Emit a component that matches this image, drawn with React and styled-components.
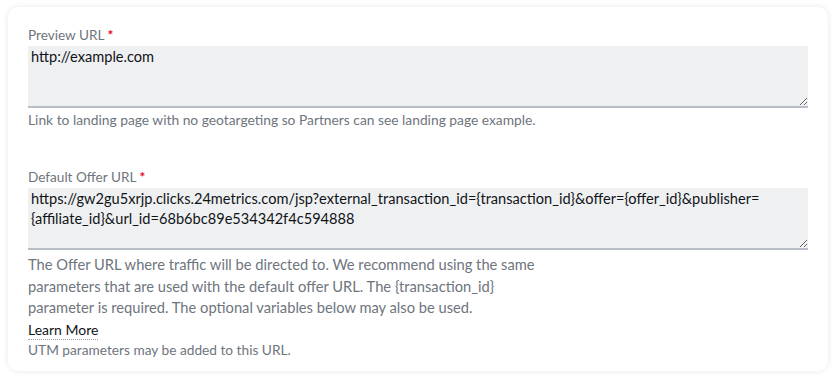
import React from "react";
import styled, { createGlobalStyle } from "styled-components";

const GlobalStyle = createGlobalStyle`
  body {
    margin: 0;
    background: #ffffff;
    font-family: Lato, "Open Sans", sans-serif;
  }
`;

const Page = styled.div`
  padding: 7px 8px;
`;

const Card = styled.div`
  width: 820px;
  height: 364px;
  box-sizing: border-box;
  background: #ffffff;
  border-radius: 10px;
  box-shadow: 0 0 6px rgba(0, 0, 0, 0.09);
  padding: 18px 20px 0 20px;
`;

const Field = styled.div`
  display: flex;
  flex-direction: column;
  margin-bottom: ${(p) => p.gap || 0}px;
`;

const Label = styled.label`
  font-size: 13.6px;
  color: #6e757d;
  line-height: 18px;
  margin-bottom: 2px;
  padding-top: 1px;
`;

const Star = styled.span`
  color: #e3001b;
  font-weight: 700;
`;

const TextArea = styled.textarea`
  display: block;
  width: 100%;
  height: 62px;
  box-sizing: border-box;
  margin: 0;
  border: none;
  border-bottom: 2px solid #b8bdc7;
  background: #eff0f2;
  color: #111417;
  font-family: Lato, "Open Sans", sans-serif;
  font-size: 14.6px;
  line-height: 20px;
  padding: 1px 3px;
  resize: vertical;
  outline: none;
`;

const Help = styled.div`
  font-size: ${(p) => p.size || 13.8}px;
  line-height: ${(p) => p.lh || 18}px;
  color: #6e757d;
  max-width: ${(p) => p.max || 800}px;
  margin-top: ${(p) => p.top || 0}px;
`;

const LearnMore = styled.a`
  display: inline-block;
  color: #111417;
  font-size: 14px;
  line-height: 18px;
  text-decoration: none;
  border-bottom: 1px dotted #9aa0a6;
  cursor: pointer;
`;

export default function App() {
  return (
    <>
      <GlobalStyle />
      <Page>
        <Card>
          <Field gap={38}>
            <Label>
              Preview URL <Star>*</Star>
            </Label>
            <TextArea readOnly defaultValue="http://example.com" />
            <Help top={3}>
              Link to landing page with no geotargeting so Partners can see landing page example.
            </Help>
          </Field>
          <Field>
            <Label>
              Default Offer URL <Star>*</Star>
            </Label>
            <TextArea
              readOnly
              defaultValue="https://gw2gu5xrjp.clicks.24metrics.com/jsp?external_transaction_id={transaction_id}&offer={offer_id}&publisher={affiliate_id}&url_id=68b6bc89e534342f4c594888"
            />
            <Help size={14.7} lh={21.5} max={515} top={4}>
              The Offer URL where traffic will be directed to. We recommend using the same parameters
              that are used with the default offer URL. The {"{transaction_id}"} parameter is required.
              The optional variables below may also be used.
            </Help>
            <div>
              <LearnMore>Learn More</LearnMore>
            </div>
            <Help size={13.7} top={1}>UTM parameters may be added to this URL.</Help>
          </Field>
        </Card>
      </Page>
    </>
  );
}
